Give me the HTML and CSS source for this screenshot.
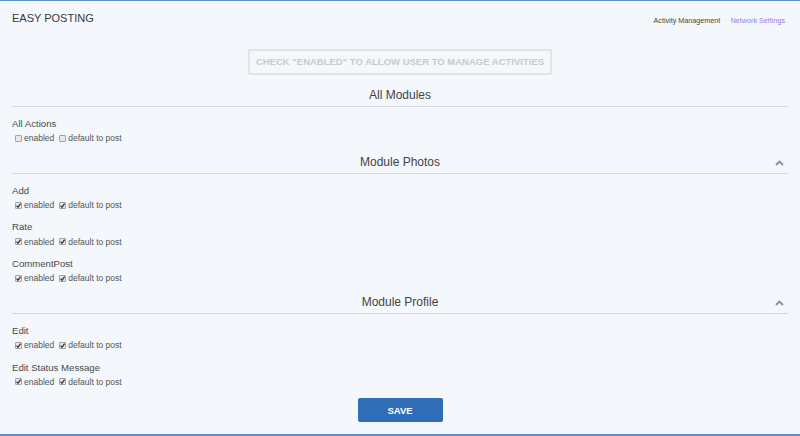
FILE: index.html
```html
<!DOCTYPE html>
<html>
<head>
<meta charset="utf-8">
<link rel="stylesheet" href="styles.css">
</head>
<body>
<div class="page">
  <div class="topbar">
    <div class="title">EASY POSTING</div>
    <div class="nav"><span class="nav-cur">Activity Management</span><span class="sep">·</span><span class="nav-link">Network Settings</span></div>
  </div>
  <div class="notice-wrap"><div class="notice">CHECK "ENABLED" TO ALLOW USER TO MANAGE ACTIVITIES</div></div>

  <div class="section first">
    <div class="sec-head">All Modules</div>
    <div class="item">
      <div class="label">All Actions</div>
      <div class="checks">
        <span class="cb"></span><span class="ct">enabled</span>
        <span class="cb"></span><span class="ct">default to post</span>
      </div>
    </div>
  </div>

  <div class="section">
    <div class="sec-head">Module Photos<svg class="chev" width="9" height="6" viewBox="0 0 9 6"><polyline points="1,5 4.5,1.5 8,5" fill="none" stroke="#8a8d91" stroke-width="1.8"/></svg></div>
    <div class="item">
      <div class="label">Add</div>
      <div class="checks">
        <span class="cb on"><svg viewBox="0 0 7 7"><polyline points="1.5,3.6 3,5.2 5.6,1.6" fill="none" stroke="#333" stroke-width="1.2"/></svg></span><span class="ct">enabled</span>
        <span class="cb on"><svg viewBox="0 0 7 7"><polyline points="1.5,3.6 3,5.2 5.6,1.6" fill="none" stroke="#333" stroke-width="1.2"/></svg></span><span class="ct">default to post</span>
      </div>
    </div>
    <div class="item">
      <div class="label">Rate</div>
      <div class="checks">
        <span class="cb on"><svg viewBox="0 0 7 7"><polyline points="1.5,3.6 3,5.2 5.6,1.6" fill="none" stroke="#333" stroke-width="1.2"/></svg></span><span class="ct">enabled</span>
        <span class="cb on"><svg viewBox="0 0 7 7"><polyline points="1.5,3.6 3,5.2 5.6,1.6" fill="none" stroke="#333" stroke-width="1.2"/></svg></span><span class="ct">default to post</span>
      </div>
    </div>
    <div class="item">
      <div class="label">CommentPost</div>
      <div class="checks">
        <span class="cb on"><svg viewBox="0 0 7 7"><polyline points="1.5,3.6 3,5.2 5.6,1.6" fill="none" stroke="#333" stroke-width="1.2"/></svg></span><span class="ct">enabled</span>
        <span class="cb on"><svg viewBox="0 0 7 7"><polyline points="1.5,3.6 3,5.2 5.6,1.6" fill="none" stroke="#333" stroke-width="1.2"/></svg></span><span class="ct">default to post</span>
      </div>
    </div>
  </div>

  <div class="section">
    <div class="sec-head">Module Profile<svg class="chev" width="9" height="6" viewBox="0 0 9 6"><polyline points="1,5 4.5,1.5 8,5" fill="none" stroke="#8a8d91" stroke-width="1.8"/></svg></div>
    <div class="item">
      <div class="label">Edit</div>
      <div class="checks">
        <span class="cb on"><svg viewBox="0 0 7 7"><polyline points="1.5,3.6 3,5.2 5.6,1.6" fill="none" stroke="#333" stroke-width="1.2"/></svg></span><span class="ct">enabled</span>
        <span class="cb on"><svg viewBox="0 0 7 7"><polyline points="1.5,3.6 3,5.2 5.6,1.6" fill="none" stroke="#333" stroke-width="1.2"/></svg></span><span class="ct">default to post</span>
      </div>
    </div>
    <div class="item">
      <div class="label">Edit Status Message</div>
      <div class="checks">
        <span class="cb on"><svg viewBox="0 0 7 7"><polyline points="1.5,3.6 3,5.2 5.6,1.6" fill="none" stroke="#333" stroke-width="1.2"/></svg></span><span class="ct">enabled</span>
        <span class="cb on"><svg viewBox="0 0 7 7"><polyline points="1.5,3.6 3,5.2 5.6,1.6" fill="none" stroke="#333" stroke-width="1.2"/></svg></span><span class="ct">default to post</span>
      </div>
    </div>
  </div>

  <div class="save-wrap"><button class="save">SAVE</button></div>
</div>
</body>
</html>
```
FILE: styles.css
```css
* { box-sizing: border-box; }
html, body { margin: 0; padding: 0; }
body {
  font-family: "Liberation Sans", Arial, sans-serif;
  background: #f4f7fb;
  color: #444;
}
.page {
  width: 800px;
  height: 436px;
  border-top: 1px solid #5a8fd2;
  border-bottom: 2px solid #5a8fd2;
  padding: 0 12px;
  background: #f4f7fb;
  overflow: hidden;
}
.topbar {
  display: flex;
  justify-content: space-between;
  align-items: flex-start;
  padding-top: 11px;
}
.title {
  font-size: 11px;
  line-height: 13px;
  color: #3a3a3a;
}
.nav {
  margin-top: 4px;
  margin-right: 3px;
  font-size: 7.2px;
  line-height: 10px;
}
.nav-cur { color: #444; }
.sep { color: #c4c4c4; margin: 0 4px; }
.nav-link { color: #8a7ff0; }
.notice-wrap {
  display: flex;
  justify-content: center;
  margin-top: 23px;
}
.notice {
  border: 2px solid #e1e3e6;
  border-radius: 2px;
  padding: 0 6px;
  line-height: 22px;
  font-size: 9.5px;
  font-weight: bold;
  color: #cacaca;
  white-space: nowrap;
}
.section { margin-top: 10.5px; }
.section.first { margin-top: 11.5px; }
.sec-head {
  position: relative;
  text-align: center;
  font-size: 12px;
  line-height: 16px;
  padding-bottom: 3px;
  border-bottom: 1px solid #d5d9de;
  color: #444;
}
.chev {
  position: absolute;
  right: 4px;
  top: 6px;
}
.item { margin-top: 11.2px; }
.label {
  font-size: 9.6px;
  line-height: 12px;
  color: #4a4a4a;
}
.checks {
  display: flex;
  align-items: center;
  margin-top: 3.4px;
  height: 10px;
  padding-left: 3px;
  font-size: 8.5px;
  color: #555;
}
.cb {
  width: 7px;
  height: 7px;
  border: 1px solid #a3a3a3;
  border-radius: 1px;
  background: #e9e9e9;
  display: inline-flex;
  align-items: center;
  justify-content: center;
  margin-right: 2px;
}
.cb svg { width: 7px; height: 7px; display: block; flex: none; }
.ct { margin-right: 5px; }
.save-wrap {
  display: flex;
  justify-content: center;
  margin-top: 11.5px;
}
.save {
  width: 85px;
  height: 24px;
  background: #2f6db6;
  border: none;
  border-radius: 2px;
  color: #fff;
  font-family: "Liberation Sans", Arial, sans-serif;
  font-weight: bold;
  font-size: 9.5px;
  padding: 0;
}
```
